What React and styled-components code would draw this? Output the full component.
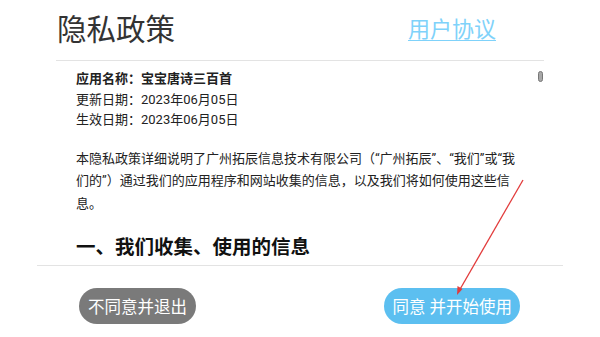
import React from "react";
import styled, { createGlobalStyle } from "styled-components";

const Global = createGlobalStyle`
  html, body {
    margin: 0;
    padding: 0;
    background: #fff;
  }
  body {
    font-family: Roboto, "Noto Sans CJK SC", sans-serif;
    color: #222;
  }
`;

const Page = styled.div`
  position: relative;
  width: 600px;
  height: 337px;
  overflow: hidden;
  display: flex;
  flex-direction: column;
`;

const Header = styled.div`
  margin: 0 56px;
  height: 60px;
  display: flex;
  align-items: center;
  justify-content: space-between;
  border-bottom: 1px solid #e3e3e3;
  padding: 0 48px 0 1px;
`;

const Title = styled.h1`
  margin: 0;
  font-size: 29.5px;
  font-weight: 400;
  color: #333;
  line-height: 1;
  padding-top: 1px;
`;

const Link = styled.a`
  font-size: 22px;
  color: #7fd2fa;
  text-decoration: underline;
  text-underline-offset: 3px;
  text-decoration-thickness: 1px;
  line-height: 1;
`;

const Body = styled.div`
  position: relative;
  height: 204px;
  overflow: hidden;
  padding: 8px 0 0 76px;
  box-sizing: border-box;
`;

const Info = styled.div`
  font-size: 13px;
  line-height: 20.5px;
  color: #222;
  font-weight: ${(p) => (p.$bold ? 700 : 400)};
`;

const Para = styled.p`
  margin: 17px 0 0;
  font-size: 13px;
  line-height: 22.5px;
  color: #222;
  white-space: nowrap;
`;

const Heading = styled.h2`
  margin: 19px 0 0;
  font-size: 19.5px;
  line-height: 28px;
  font-weight: 700;
  color: #111;
`;

const Thumb = styled.div`
  position: absolute;
  left: 538px;
  top: 10px;
  width: 5px;
  height: 11px;
  border-radius: 3px;
  background: #a8a8a8;
  border: 1px solid #777;
  box-sizing: border-box;
`;

const Footer = styled.div`
  margin: 0 37px;
  border-top: 1px solid #e3e3e3;
  padding: 22px 43px 0 42px;
  display: flex;
  justify-content: space-between;
`;

const Button = styled.button`
  height: 36px;
  border: none;
  border-radius: 18px;
  padding: 0 ${(p) => p.$pad}px;
  font-family: Roboto, "Noto Sans CJK SC", sans-serif;
  font-size: 16.5px;
  color: #fff;
  background: ${(p) => p.$bg};
  white-space: pre;
`;

const Arrow = styled.svg`
  position: absolute;
  left: 0;
  top: 0;
  pointer-events: none;
`;

export default function App() {
  return (
    <>
      <Global />
      <Page>
        <Header>
          <Title>隐私政策</Title>
          <Link>用户协议</Link>
        </Header>
        <Body>
          <Info $bold>应用名称：宝宝唐诗三百首</Info>
          <Info>更新日期：2023年06月05日</Info>
          <Info>生效日期：2023年06月05日</Info>
          <Para>
            本隐私政策详细说明了广州拓辰信息技术有限公司（“广州拓辰”、“我们”或“我
            <br />
            们的”）通过我们的应用程序和网站收集的信息，以及我们将如何使用这些信
            <br />
            息。
          </Para>
          <Heading>一、我们收集、使用的信息</Heading>
          <Thumb />
        </Body>
        <Footer>
          <Button $bg="#7a7a7a" $pad={9}>不同意并退出</Button>
          <Button $bg="#5cbff0" $pad={8}>同意 并开始使用</Button>
        </Footer>
        <Arrow width="600" height="337" viewBox="0 0 600 337">
          <line x1="523" y1="180" x2="459" y2="291" stroke="#e23b3b" strokeWidth="1.3" />
          <path d="M457 295 L457.5 286 L462.5 289 Z" fill="#e23b3b" />
        </Arrow>
      </Page>
    </>
  );
}
